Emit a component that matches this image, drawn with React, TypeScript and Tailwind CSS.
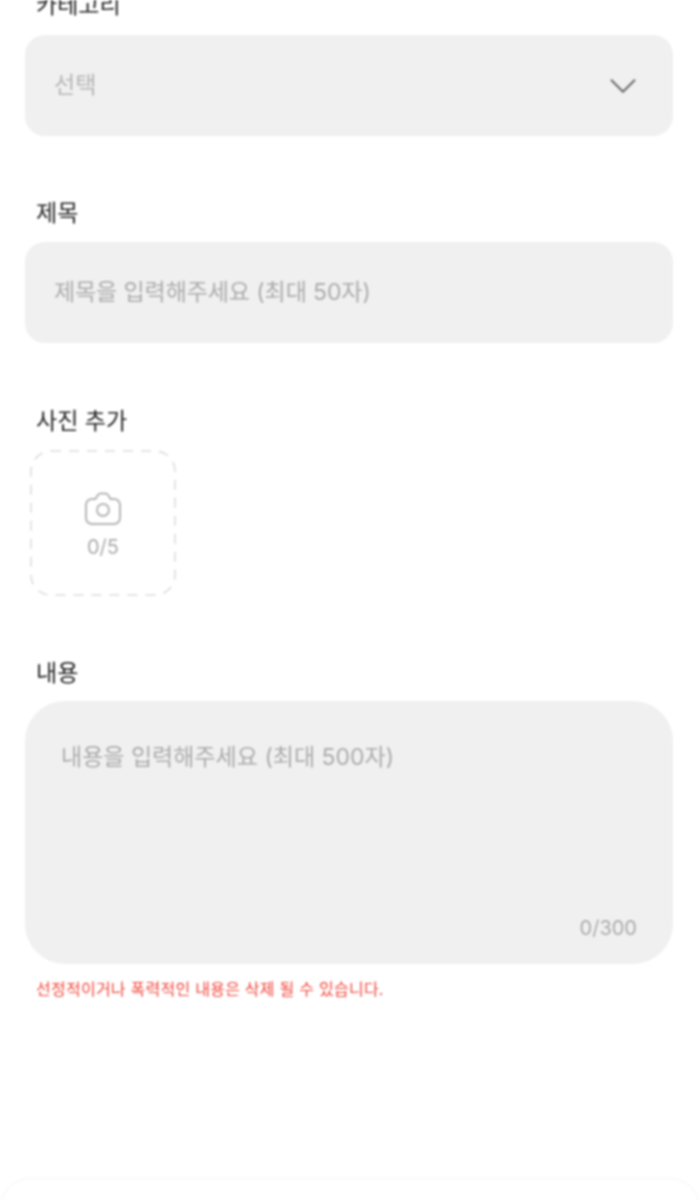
import React from "react";
import { ChevronDown } from "lucide-react";

const FONT = "font-['Inter','Noto_Sans_CJK_KR',sans-serif]";

function Label({ children }: { children: React.ReactNode }) {
  return <p className="pl-[36px] text-[23px] leading-[30px] text-[#222222]">{children}</p>;
}

function CameraIcon() {
  return (
    <svg width="36" height="33" viewBox="0 0 36 33" fill="none" stroke="#b5b5b5" strokeWidth="2" strokeLinejoin="round">
      <path d="M7 7h3.5l2.2-3.8A4 4 0 0 1 16 1.5h4a4 4 0 0 1 3.3 1.7L25.5 7H29a6 6 0 0 1 6 6v13a6 6 0 0 1-6 6H7a6 6 0 0 1-6-6V13a6 6 0 0 1 6-6z" />
      <circle cx="18" cy="18" r="6" />
    </svg>
  );
}

export default function App() {
  return (
    <div className={`${FONT} relative h-[1200px] w-[700px] overflow-hidden bg-white blur-[0.8px]`}>
      <div className="mt-[-10px] flex flex-col">
        <Label>카테고리</Label>
        <div className="mx-[25px] mt-[15px] flex h-[101px] w-[648px] items-center justify-between rounded-[20px] bg-[#f0f0f0] pl-[29px] pr-[27px]">
          <span className="text-[23px] text-[#b5b5b5]">선택</span>
          <ChevronDown className="h-[46px] w-[46px] text-[#666666]" strokeWidth={1} />
        </div>

        <div className="mt-[62px]">
          <Label>제목</Label>
        </div>
        <div className="mx-[25px] mt-[14px] flex h-[101px] w-[648px] items-center rounded-[20px] bg-[#f0f0f0] pl-[29px]">
          <span className="text-[23px] tracking-[-0.1px] text-[#ababab]">제목을 입력해주세요 (최대 50자)</span>
        </div>

        <div className="mt-[63px]">
          <Label>사진 추가</Label>
        </div>
        <div className="relative ml-[30px] mt-[14px] flex h-[146px] w-[146px] flex-col items-center justify-center pt-[7px]">
          <svg className="absolute inset-0" width="146" height="146" fill="none">
            <rect x="1" y="1" width="144" height="144" rx="20" stroke="#dddddd" strokeWidth="1.6" strokeDasharray="10 8" />
          </svg>
          <CameraIcon />
          <span className="mt-[8px] text-[20px] leading-[28px] text-[#ababab]">0/5</span>
        </div>

        <div className="mt-[62px]">
          <Label>내용</Label>
        </div>
        <div className="mx-[25px] mt-[13px] flex h-[263px] w-[648px] flex-col justify-between rounded-[40px] bg-[#f0f0f0] pb-[22px] pl-[36px] pr-[36px] pt-[39px]">
          <span className="text-[23px] leading-[34px] text-[#ababab]">내용을 입력해주세요 (최대 500자)</span>
          <span className="self-end text-[20px] leading-[28px] text-[#ababab]">0/300</span>
        </div>
        <p className="mt-[14px] pl-[36px] text-[16px] leading-[22px] tracking-[0.25px] text-[#f04438]">
          선정적이거나 폭력적인 내용은 삭제 될 수 있습니다.
        </p>
      </div>

      <div className="absolute left-0 top-[1178px] h-[60px] w-[700px] rounded-t-[30px] border border-[#f5f5f5] bg-white" />
    </div>
  );
}
